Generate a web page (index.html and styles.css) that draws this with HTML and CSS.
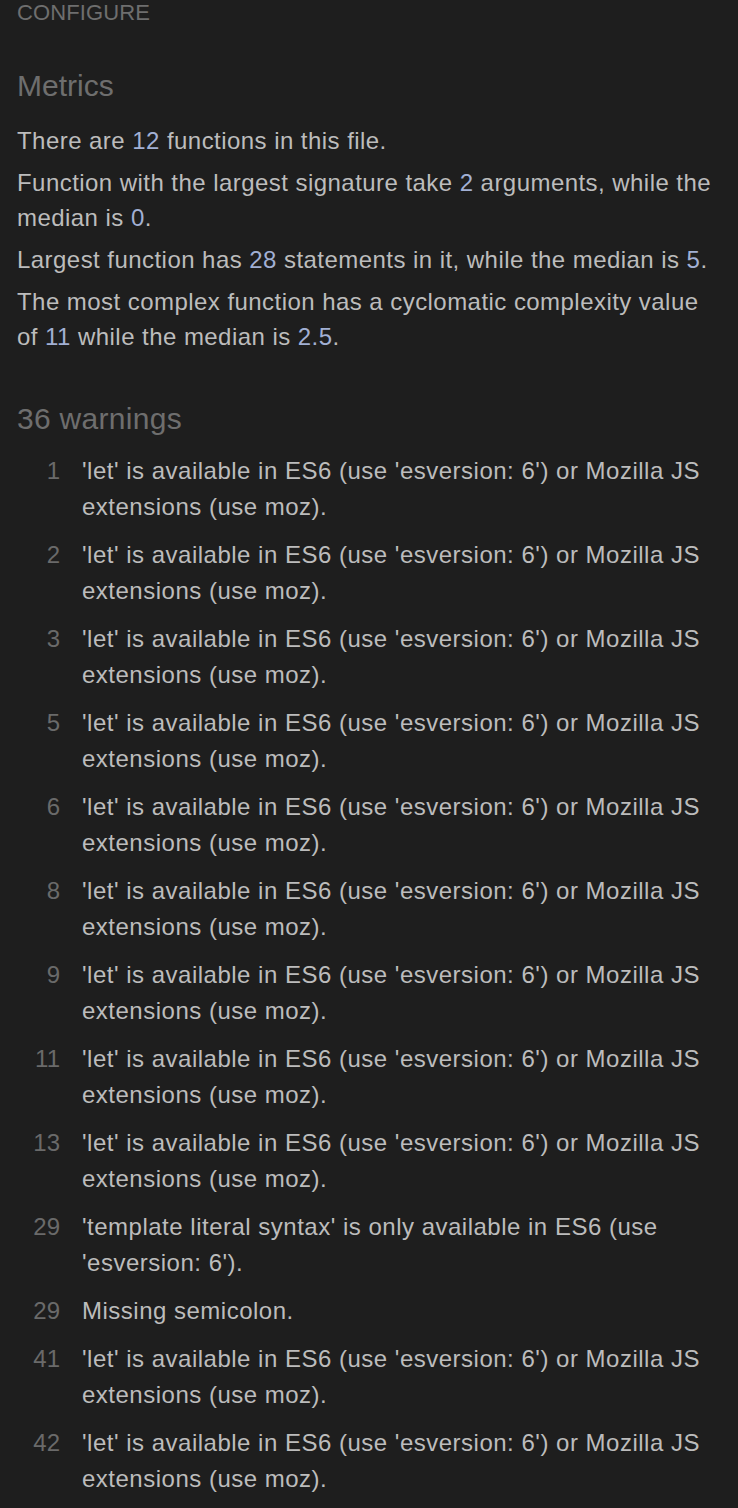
FILE: index.html
```html
<!DOCTYPE html>
<html>
<head>
<meta charset="utf-8">
<link rel="stylesheet" href="styles.css">
</head>
<body>
<div class="page">
  <div class="configure">CONFIGURE</div>
  <h2 class="section-title metrics-title">Metrics</h2>
  <div class="metrics">
    <p>There are <span class="num">12</span> functions in this file.</p>
    <p>Function with the largest signature take <span class="num">2</span> arguments, while the median is <span class="num">0</span>.</p>
    <p>Largest function has <span class="num">28</span> statements in it, while the median is <span class="num">5</span>.</p>
    <p>The most complex function has a cyclomatic complexity value of <span class="num">11</span> while the median is <span class="num">2.5</span>.</p>
  </div>
  <h2 class="section-title warnings-title">36 warnings</h2>
  <ol class="warnings">
    <li><span class="line">1</span><span class="msg">'let' is available in ES6 (use 'esversion: 6') or Mozilla JS extensions (use moz).</span></li>
    <li><span class="line">2</span><span class="msg">'let' is available in ES6 (use 'esversion: 6') or Mozilla JS extensions (use moz).</span></li>
    <li><span class="line">3</span><span class="msg">'let' is available in ES6 (use 'esversion: 6') or Mozilla JS extensions (use moz).</span></li>
    <li><span class="line">5</span><span class="msg">'let' is available in ES6 (use 'esversion: 6') or Mozilla JS extensions (use moz).</span></li>
    <li><span class="line">6</span><span class="msg">'let' is available in ES6 (use 'esversion: 6') or Mozilla JS extensions (use moz).</span></li>
    <li><span class="line">8</span><span class="msg">'let' is available in ES6 (use 'esversion: 6') or Mozilla JS extensions (use moz).</span></li>
    <li><span class="line">9</span><span class="msg">'let' is available in ES6 (use 'esversion: 6') or Mozilla JS extensions (use moz).</span></li>
    <li><span class="line">11</span><span class="msg">'let' is available in ES6 (use 'esversion: 6') or Mozilla JS extensions (use moz).</span></li>
    <li><span class="line">13</span><span class="msg">'let' is available in ES6 (use 'esversion: 6') or Mozilla JS extensions (use moz).</span></li>
    <li><span class="line">29</span><span class="msg">'template literal syntax' is only available in ES6 (use 'esversion: 6').</span></li>
    <li><span class="line">29</span><span class="msg">Missing semicolon.</span></li>
    <li><span class="line">41</span><span class="msg">'let' is available in ES6 (use 'esversion: 6') or Mozilla JS extensions (use moz).</span></li>
    <li><span class="line">42</span><span class="msg">'let' is available in ES6 (use 'esversion: 6') or Mozilla JS extensions (use moz).</span></li>
  </ol>
</div>
</body>
</html>
```
FILE: styles.css
```css
html, body {
  margin: 0;
  padding: 0;
  background: #1e1e1e;
}
body {
  font-family: "Liberation Sans", Arial, Helvetica, sans-serif;
  color: #bcbcbc;
  overflow: hidden;
}
.page {
  padding: 0 17px;
}
.configure {
  font-size: 22px;
  line-height: 26px;
  color: #6e6e6e;
  letter-spacing: 0.1px;
}
.section-title {
  font-size: 30px;
  line-height: 36px;
  font-weight: normal;
  color: #6e6e6e;
  margin: 0;
}
.metrics-title {
  margin-top: 42px;
  margin-bottom: 19px;
}
.metrics {
  display: flex;
  flex-direction: column;
  gap: 7px;
}
.metrics p {
  margin: 0;
  font-size: 24px;
  line-height: 35px;
  letter-spacing: 0.45px;
}
.num {
  color: #a2b0d4;
}
.warnings-title {
  margin-top: 47px;
  margin-bottom: 16px;
  letter-spacing: 0.3px;
}
.warnings {
  list-style: none;
  margin: 0;
  padding: 0;
  display: flex;
  flex-direction: column;
  gap: 12px;
}
.warnings li {
  display: flex;
  gap: 22px;
  font-size: 24px;
  line-height: 36px;
}
.line {
  flex: 0 0 43px;
  text-align: right;
  color: #6a6a6a;
}
.msg {
  flex: 1;
  letter-spacing: 0.5px;
}
```
